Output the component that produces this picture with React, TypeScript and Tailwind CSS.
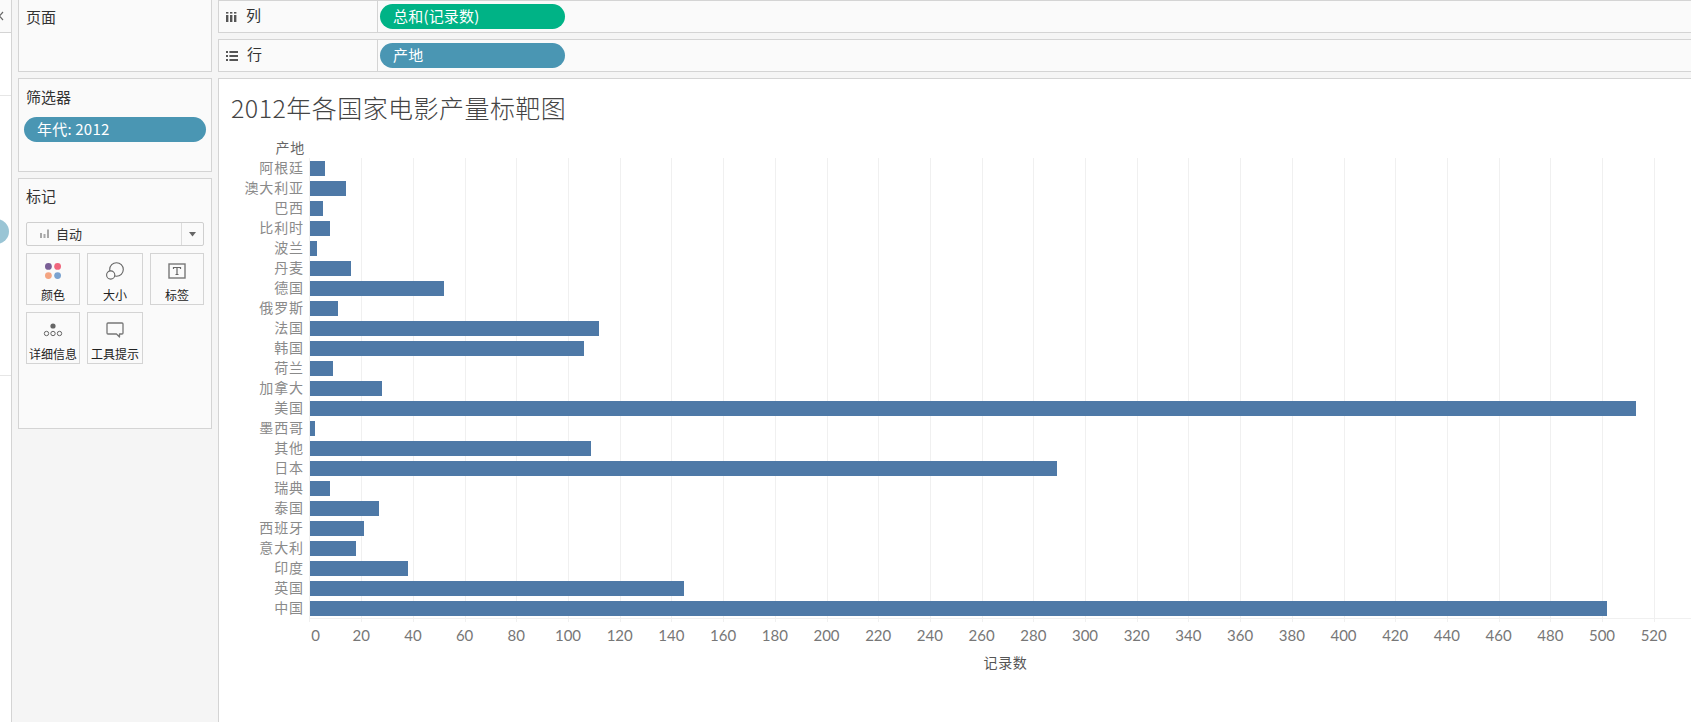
import React from 'react';

const SANS = "font-['Noto_Sans_CJK_SC','Noto_Sans',sans-serif]";

const ROWS: [string, number][] = [
  ['阿根廷', 6], ['澳大利亚', 14], ['巴西', 5], ['比利时', 8], ['波兰', 3], ['丹麦', 16],
  ['德国', 52], ['俄罗斯', 11], ['法国', 112], ['韩国', 106], ['荷兰', 9], ['加拿大', 28],
  ['美国', 513], ['墨西哥', 2], ['其他', 109], ['日本', 289], ['瑞典', 8], ['泰国', 27],
  ['西班牙', 21], ['意大利', 18], ['印度', 38], ['英国', 145], ['中国', 502],
];
const TICKS = Array.from({ length: 27 }, (_, i) => i * 20);
const PX_PER_UNIT = 2.585;

function Pill({ text, green }: { text: string; green?: boolean }) {
  return (
    <div className={`h-[25px] rounded-full flex items-center pl-[13px] text-[15px] tracking-[0.2px] text-white ${green ? 'bg-[#00b386]' : 'bg-[#4a96b3]'}`}>
      {text}
    </div>
  );
}

function Shelf({ icon, label, pill, green }: { icon: React.ReactNode; label: string; pill: string; green?: boolean }) {
  return (
    <div className="h-[33px] flex border border-r-0 border-[#d4d4d4] bg-[#fafafa]">
      <div className="w-[159px] shrink-0 flex items-center pl-[7px] gap-[9px] text-[15px] text-[#333] border-r border-[#d4d4d4]">
        {icon}
        <span className="pb-[2px]">{label}</span>
      </div>
      <div className="w-[187px] pl-[2px] pt-[3px]">
        <Pill text={pill} green={green} />
      </div>
    </div>
  );
}

function Panel({ title, className, top, children }: { title: string; className: string; top: string; children?: React.ReactNode }) {
  return (
    <div className={`border border-[#d4d4d4] bg-[#fafafa] ${className}`}>
      <div className={`pl-[7px] text-[15px] leading-[24px] text-[#333] ${top}`}>{title}</div>
      {children}
    </div>
  );
}

function MarkCard({ label, w, children }: { label: string; w: string; children: React.ReactNode }) {
  return (
    <div className={`h-[52px] border border-[#d4d4d4] flex flex-col items-center ${w}`}>
      <div className="h-[33px] flex items-center justify-center pt-[1px]">{children}</div>
      <div className="text-[12px] leading-[16px] text-[#222] whitespace-nowrap">{label}</div>
    </div>
  );
}

export default function App() {
  return (
    <div className={`w-[1691px] h-[722px] overflow-hidden flex bg-[#f5f5f5] ${SANS}`}>
      {/* collapsed data pane */}
      <div className="relative w-[12px] shrink-0 bg-white border-r border-[#d4d4d4]">
        <div className="h-[33px] border-b border-[#d4d4d4] bg-[#fafafa] flex items-center">
          <svg width="4" height="10" viewBox="0 0 4 10" fill="none" stroke="#666" strokeWidth="1.2"><path d="M-4 1 L3 9 M3 1 L-4 9" /></svg>
        </div>
        <div className="h-[63px] border-b border-[#e6e6e6]" />
        <div className="h-[280px] border-b border-[#e6e6e6]" />
        <div className="absolute left-[-16px] top-[219px] w-[25px] h-[25px] rounded-full bg-[#9ac5d5]" />
      </div>

      {/* side cards */}
      <div className="w-[194px] shrink-0 ml-[6px] flex flex-col gap-[6px]">
        <Panel title="页面" top="pt-[5px]" className="h-[72px] border-t-0" />
        <Panel title="筛选器" top="pt-[6px]" className="h-[94px]">
          <div className="mx-[5px] mt-[8px]"><Pill text="年代: 2012" /></div>
        </Panel>
        <Panel title="标记" top="pt-[5px]" className="h-[251px]">
          <div className="mx-[7px] mt-[14px] h-[24px] border border-[#cfcfcf] rounded-[2px] flex">
            <div className="flex-1 flex items-center pl-[13px] gap-[6px] text-[13px] text-[#333]">
              <svg width="10" height="10" viewBox="0 0 10 10" fill="#a8a8a8"><rect x="0" y="4" width="2" height="5" /><rect x="3.5" y="5" width="2" height="4" /><rect x="7" y="0.5" width="2" height="8.5" /></svg>
              <span className="pb-[1px]">自动</span>
            </div>
            <div className="w-[22px] border-l border-[#dcdcdc] flex items-center justify-center">
              <svg width="8" height="5" viewBox="0 0 8 5" fill="#666"><path d="M0 0H7L3.5 4.5Z" /></svg>
            </div>
          </div>
          <div className="mx-[7px] mt-[7px] flex flex-col gap-[7px]">
            <div className="flex gap-[7px]">
              <MarkCard label="颜色" w="w-[54px]">
                <svg width="16" height="16" viewBox="0 0 16 16">
                  <circle cx="3.4" cy="3.4" r="3.4" fill="#7a5f96" /><circle cx="12.6" cy="3.4" r="3.4" fill="#f0667d" />
                  <circle cx="3.4" cy="12.6" r="3.4" fill="#f4a582" /><circle cx="12.6" cy="12.6" r="3.4" fill="#7ba3d0" />
                </svg>
              </MarkCard>
              <MarkCard label="大小" w="w-[56px]">
                <svg width="18" height="18" viewBox="0 0 18 18" fill="none" stroke="#666" strokeWidth="1.1">
                  <circle cx="10.5" cy="7.5" r="6.8" /><circle cx="4.7" cy="13" r="4.1" fill="#fafafa" />
                </svg>
              </MarkCard>
              <MarkCard label="标签" w="w-[54px]">
                <svg width="18" height="16" viewBox="0 0 18 16" fill="none">
                  <rect x="1" y="1" width="16" height="14" stroke="#777" strokeWidth="1.4" />
                  <path d="M5.5 6V4.5H12.5V6M9 4.5V11.5M7.5 11.5H10.5" stroke="#666" strokeWidth="1.2" />
                </svg>
              </MarkCard>
            </div>
            <div className="flex gap-[7px]">
              <MarkCard label="详细信息" w="w-[54px]">
                <svg width="20" height="14" viewBox="0 0 20 14" fill="none" stroke="#666" strokeWidth="1">
                  <circle cx="10" cy="3" r="2.6" fill="#666" stroke="none" />
                  <circle cx="3.5" cy="10.5" r="2.2" /><circle cx="10" cy="10.5" r="2.2" /><circle cx="16.5" cy="10.5" r="2.2" />
                </svg>
              </MarkCard>
              <MarkCard label="工具提示" w="w-[56px]">
                <svg width="18" height="16" viewBox="0 0 18 16" fill="none" stroke="#777" strokeWidth="1.3">
                  <path d="M2 1H16Q17 1 17 2V11Q17 12 16 12H13.5V15L10.5 12H2Q1 12 1 11V2Q1 1 2 1Z" strokeLinejoin="round" />
                </svg>
              </MarkCard>
            </div>
          </div>
        </Panel>
      </div>

      {/* shelves and view */}
      <div className="flex-1 ml-[6px] flex flex-col gap-[6px] min-w-0">
        <Shelf
          label="列"
          pill="总和(记录数)"
          green
          icon={<svg width="11" height="10" viewBox="0 0 11 10" fill="#555"><rect x="0" y="3" width="2.4" height="7" /><rect x="4" y="3" width="2.4" height="7" /><rect x="8" y="3" width="2.4" height="7" /><rect x="0" y="0" width="2.4" height="1.6" /><rect x="4" y="0" width="2.4" height="1.6" /><rect x="8" y="0" width="2.4" height="1.6" /></svg>}
        />
        <Shelf
          label="行"
          pill="产地"
          icon={<svg width="12" height="10" viewBox="0 0 12 10" fill="#555"><rect x="0" y="0" width="2" height="2" /><rect x="3.4" y="0" width="8.6" height="2" /><rect x="0" y="4" width="2" height="2" /><rect x="3.4" y="4" width="8.6" height="2" /><rect x="0" y="8" width="2" height="2" /><rect x="3.4" y="8" width="8.6" height="2" /></svg>}
        />
        <div className="flex-1 bg-white border-l border-t border-[#d4d4d4] pl-[12px]">
          <div className="pt-[10px] h-[47px] text-[25px] leading-[36px] font-light tracking-[0.45px] text-[#444] whitespace-nowrap">2012年各国家电影产量标靶图</div>
          <div className="w-[74px] mt-[11px] h-[21px] text-right text-[14px] leading-[20px] tracking-[0.7px] text-[#666]">产地</div>
          <div className="flex">
            <div className="w-[79px] h-[464px] shrink-0 border-r border-[#f0f0f0]">
              <div className="-mt-[1px]">
                {ROWS.map(([name]) => (
                  <div key={name} className="h-[20px] pr-[5px] text-right text-[14px] leading-[20px] text-[#8a8a8a] tracking-[0.9px] whitespace-nowrap">{name}</div>
                ))}
              </div>
            </div>
            <div className="relative flex-1 h-[464px]">
              {TICKS.slice(1).map((t) => (
                <div key={t} className="absolute top-0 h-[464px] w-px bg-[#f0f0f0]" style={{ left: t * PX_PER_UNIT - 0.5 }} />
              ))}
              <div className="absolute left-0 right-0 top-[460px] h-px bg-[#f0f0f0]" />
              <div className="relative pt-[2px]">
                {ROWS.map(([name, v]) => (
                  <div key={name} className="h-[20px] pt-[1px]">
                    <div className="h-[15px] bg-[#4e79a7]" style={{ width: v * PX_PER_UNIT - 0.4 }} />
                  </div>
                ))}
              </div>
            </div>
          </div>
          <div className="ml-[79px] relative h-[24px]">
            {TICKS.map((t) => (
              <span
                key={t}
                className={`absolute top-[3px] text-[15px] leading-[20px] text-[#777] font-['Lato',sans-serif] ${t === 0 ? 'ml-[6px]' : ''}`}
                style={{ left: t * PX_PER_UNIT - 0.5, transform: 'translateX(-50%)' }}
              >
                {t}
              </span>
            ))}
          </div>
          <div className="ml-[78px] w-[1393px] mt-[6px] text-center text-[14px] leading-[20px] tracking-[0.7px] text-[#555]">记录数</div>
        </div>
      </div>
    </div>
  );
}
